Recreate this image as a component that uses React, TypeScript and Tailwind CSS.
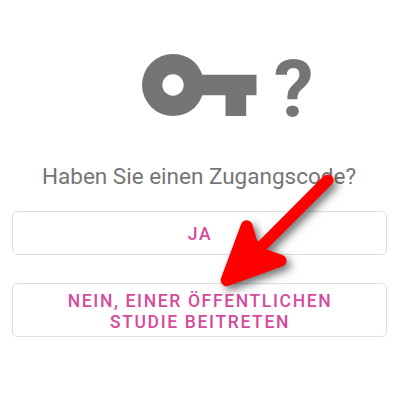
function KeyIcon() {
  return (
    <svg className="block h-[62px] w-[115px]" viewBox="0 0 115 62" fill="#757575">
      <path
        fillRule="evenodd"
        d="M31 0C45 0 56 8 60.3 20.7H114.5V41.3H104.2V62H83.5V41.3H60.3C56 54 45 62 31 62A31 31 0 0 1 31 0ZM31 20.3A10.7 10.7 0 1 0 31 41.7A10.7 10.7 0 1 0 31 20.3Z"
      />
    </svg>
  );
}

function Arrow() {
  return (
    <svg
      className="pointer-events-none absolute inset-0 h-[400px] w-[400px] drop-shadow-[4px_4px_4px_rgba(0,0,0,0.55)]"
      viewBox="0 0 400 400"
      fill="#ff0000"
      stroke="#ff0000"
      strokeLinecap="round"
      strokeLinejoin="round"
    >
      <path strokeWidth="12" d="M226.7 280.2 246.7 226.3 251.5 243 264 255 280.5 260.7Z" />
      <path strokeWidth="11.6" d="M327.8 180.2 255 253" />
    </svg>
  );
}

const buttonClass =
  "block w-full rounded-[5px] border border-[#dedede] bg-white pl-[1px] text-center text-[17.5px] leading-[21px] font-medium tracking-[1.65px] text-[#d64a9b]";

export default function App() {
  return (
    <main className="relative h-[400px] w-[400px] overflow-hidden bg-white pr-[13px] pl-[12px] font-['Roboto',sans-serif] text-[#757575]">
      <div className="flex h-[160px] items-start pt-[54px] pl-[129.8px]">
        <KeyIcon />
        <span className="ml-[17px] pt-px text-[80px] leading-[70px] font-bold">?</span>
      </div>
      <h1 className="h-[51px] pt-[2px] pr-[1px] text-center text-[22.5px] leading-[28px] font-normal whitespace-nowrap">
        Haben Sie einen Zugangscode?
      </h1>
      <button className={`${buttonClass} h-[44px] pt-[2px]`}>JA</button>
      <button className={`${buttonClass} mt-[28px] h-[54px] pt-[3px]`}>
        NEIN, EINER ÖFFENTLICHEN
        <br />
        STUDIE BEITRETEN
      </button>
      <Arrow />
    </main>
  );
}
